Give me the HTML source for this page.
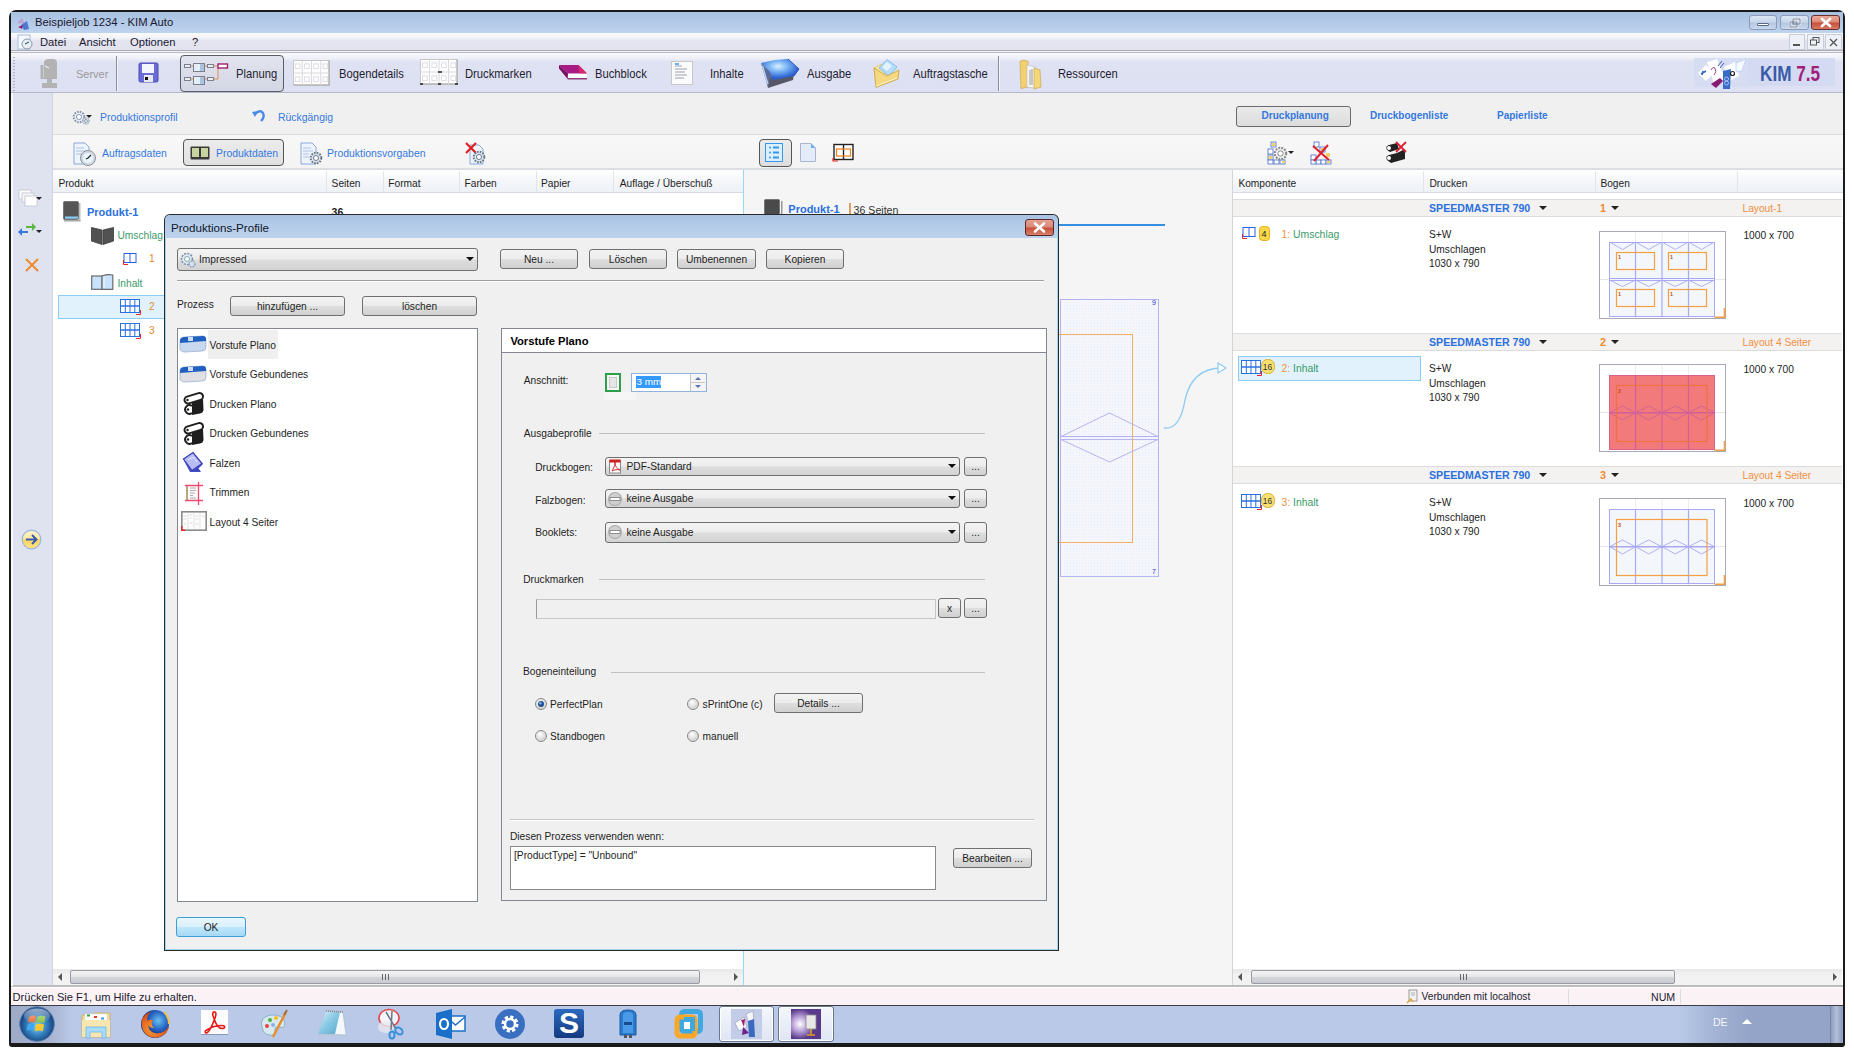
<!DOCTYPE html>
<html><head><meta charset="utf-8">
<style>
*{box-sizing:border-box;margin:0;padding:0}
html,body{width:1854px;height:1056px;overflow:hidden;background:#fff;font-family:"Liberation Sans",sans-serif;font-size:10.2px;color:#1e1e1e}
.a{position:absolute}
.t{position:absolute;white-space:nowrap}
svg.a{overflow:visible}
</style></head><body>
<div class="a" style="left:9px;top:10px;width:1836px;height:1037px;background:#1a1a1a;border-radius:7px 7px 3px 3px"></div>
<div class="a" style="left:11px;top:12px;width:1832px;height:21px;background:linear-gradient(#a8c0e1,#b3c9e7 50%,#bed3ee)"></div>
<div class="t" style="left:35px;top:15.05px;font-size:11.25px;line-height:14px;color:#1a1a30;">Beispieljob 1234 - KIM Auto</div>
<div class="a" style="left:11px;top:33px;width:1832px;height:17px;background:linear-gradient(#fbfbfd 0%,#f2f2f8 30%,#e4e4f0 45%,#e2e3ef 100%)"></div>
<div class="a" style="left:11px;top:50px;width:1832px;height:1px;background:#a8aab4"></div>
<div class="a" style="left:11px;top:51px;width:1832px;height:1px;background:#f4f4f8"></div>
<div class="a" style="left:11px;top:52px;width:1832px;height:1px;background:#b8bac4"></div>
<div class="t" style="left:40px;top:35.25px;font-size:11.2px;line-height:14px;color:#1a1a30;">Datei</div>
<div class="t" style="left:79px;top:35.25px;font-size:11.2px;line-height:14px;color:#1a1a30;">Ansicht</div>
<div class="t" style="left:130px;top:35.25px;font-size:11.2px;line-height:14px;color:#1a1a30;">Optionen</div>
<div class="t" style="left:192px;top:35.25px;font-size:11.2px;line-height:14px;color:#1a1a30;">?</div>
<div class="a" style="left:11px;top:53px;width:1832px;height:40px;background:linear-gradient(#f8f8fc 0%,#f0f1f9 12%,#dfe2f3 22%,#dde0f2 100%)"></div>
<div class="a" style="left:11px;top:92px;width:1832px;height:1px;background:#b4b8c8"></div>
<div class="a" style="left:11px;top:93px;width:42px;height:893px;background:#dfe3ef"></div>
<div class="a" style="left:52px;top:93px;width:1px;height:893px;background:#d0d4e0"></div>
<div class="a" style="left:53px;top:93px;width:1790px;height:42px;background:#f0f0f0"></div>
<div class="a" style="left:53px;top:134px;width:1790px;height:1px;background:#d9d9d9"></div>
<div class="a" style="left:53px;top:135px;width:1790px;height:35px;background:linear-gradient(#f8f8f8,#f3f3f3)"></div>
<div class="a" style="left:53px;top:168px;width:1790px;height:2px;background:#dadde2"></div>
<div class="a" style="left:53px;top:170px;width:690px;height:815px;background:#fff"></div>
<div class="a" style="left:743px;top:170px;width:1px;height:815px;background:#9ad6f5"></div>
<div class="a" style="left:744px;top:170px;width:488px;height:815px;background:#f5f5f5"></div>
<div class="a" style="left:1232px;top:170px;width:1px;height:815px;background:#d4d4d4"></div>
<div class="a" style="left:1233px;top:170px;width:610px;height:815px;background:#fff"></div>
<div class="a" style="left:11px;top:985px;width:1832px;height:2px;background:#bcbcbc"></div>
<div class="a" style="left:11px;top:987px;width:1832px;height:1px;background:#fff"></div>
<div class="a" style="left:11px;top:988px;width:1832px;height:17px;background:#faf2f5"></div>
<div class="t" style="left:12.5px;top:990.25px;font-size:11.1px;line-height:14px;color:#1a1a30;">Drücken Sie F1, um Hilfe zu erhalten.</div>
<div class="a" style="left:1568px;top:989px;width:1px;height:15px;background:#ddd"></div>
<div class="a" style="left:1680px;top:989px;width:1px;height:15px;background:#ddd"></div>
<div class="t" style="left:1421.5px;top:990.24px;font-size:10.2px;line-height:14px;color:#1a1a30;">Verbunden mit localhost</div>
<div class="t" style="left:1651px;top:990.24px;font-size:10.6px;line-height:14px;color:#1a1a30;">NUM</div>
<div class="a" style="left:11px;top:1005px;width:1832px;height:38px;background:linear-gradient(90deg,#b9c9e7 0%,#b9c9e7 91%,#a0b0d2 93.3%,#94a4c8 95%,#94a4c8 100%);border-top:1px solid #3c3c44"></div>
<div class="t" style="left:1713px;top:1015.24px;font-size:10.5px;line-height:14px;color:#f4f6fb;">DE</div>
<div class="a" style="left:1742px;top:1019px;width:0;height:0;border-left:5px solid transparent;border-right:5px solid transparent;border-bottom:5px solid #fff"></div>
<div class="a" style="left:1830px;top:1006px;width:12px;height:37px;background:linear-gradient(90deg,#8d9cc0,#b4bfd8,#8d9cc0);border-left:1px solid #7786aa"></div>
<div class="a" style="left:13px;top:57px;width:2px;height:1px;background:#aab0c4"></div>
<div class="a" style="left:13px;top:60px;width:2px;height:1px;background:#aab0c4"></div>
<div class="a" style="left:13px;top:63px;width:2px;height:1px;background:#aab0c4"></div>
<div class="a" style="left:13px;top:66px;width:2px;height:1px;background:#aab0c4"></div>
<div class="a" style="left:13px;top:69px;width:2px;height:1px;background:#aab0c4"></div>
<div class="a" style="left:13px;top:72px;width:2px;height:1px;background:#aab0c4"></div>
<div class="a" style="left:13px;top:75px;width:2px;height:1px;background:#aab0c4"></div>
<div class="a" style="left:13px;top:78px;width:2px;height:1px;background:#aab0c4"></div>
<div class="a" style="left:13px;top:81px;width:2px;height:1px;background:#aab0c4"></div>
<div class="a" style="left:13px;top:84px;width:2px;height:1px;background:#aab0c4"></div>
<div class="a" style="left:13px;top:87px;width:2px;height:1px;background:#aab0c4"></div>
<div class="a" style="left:13px;top:90px;width:2px;height:1px;background:#aab0c4"></div>
<svg class="a" style="left:41px;top:59px;" width="17" height="29" viewBox="0 0 17 29"><path d="M3 4 Q3 0 8 0 L12 0 Q16 0 16 4 L16 20 L11 20 L11 24 L16 24 L16 29 L1 29 L1 24 L6 24 L6 20 L1 20 L3 18Z" fill="#b3b3b3"/><path d="M1 6 L1 20" stroke="#b3b3b3" stroke-width="3"/><path d="M4 7 L8 9" stroke="#fff" stroke-width="1"/></svg>
<div class="t" style="left:76px;top:66.95px;font-size:11px;line-height:14px;color:#9a9a9a;">Server</div>
<div class="a" style="left:116px;top:56px;width:1px;height:35px;background:#8a8fa0"></div>
<div class="a" style="left:117px;top:56px;width:1px;height:35px;background:#f4f5fb"></div>
<svg class="a" style="left:139px;top:63px;" width="19" height="19" viewBox="0 0 19 19"><rect x="0" y="0" width="19" height="19" rx="1.5" fill="#6c6cd6"/><rect x="0" y="0" width="19" height="19" rx="1.5" fill="none" stroke="#4a4ab0"/><rect x="3" y="1" width="12" height="9" fill="#f4f6ff"/><rect x="5" y="12" width="9" height="7" fill="#e8e8f0"/><rect x="6" y="14" width="3" height="3" fill="#111"/></svg>
<div class="a" style="left:180px;top:55px;width:104px;height:37px;border:1px solid #5a5c66;border-radius:4px;background:linear-gradient(#e2e4ee,#d3d6e4)"></div>
<svg class="a" style="left:184px;top:63px;" width="45" height="22" viewBox="0 0 45 22"><g stroke="#e08a50" stroke-width="1" fill="none"><path d="M6 3 L10 3 M20 3 L24 3 M30 3 L34 3 L34 16 L30 16 M6 16 L10 16 M20 16 L24 16 M34 3 L34 3"/></g><g fill="#e6eef8" stroke="#7a8090" stroke-width="1"><rect x="0.5" y="1.5" width="6" height="3"/><rect x="9.5" y="0.5" width="11" height="8"/><rect x="23.5" y="1.5" width="6" height="3"/><rect x="0.5" y="14.5" width="6" height="3"/><rect x="9.5" y="13.5" width="11" height="8"/><rect x="23.5" y="14.5" width="6" height="3"/></g><rect x="34" y="1" width="9.5" height="4" fill="#fff" stroke="#a0206a" stroke-width="1.4"/><rect x="16" y="1" width="4" height="7" fill="#a8c4e0"/><rect x="16" y="14" width="4" height="7" fill="#a8c4e0"/></svg>
<div class="t" style="left:235.5px;top:66.96px;font-size:12.2px;line-height:14px;color:#1e1e30;transform:scaleX(.92);transform-origin:0 0;">Planung</div>
<svg class="a" style="left:293px;top:60px;" width="37" height="26" viewBox="0 0 37 26"><rect x="0.5" y="0.5" width="36" height="25" fill="#fdfdfd" stroke="#c8c8c8"/><path d="M1 25 H36 V1" stroke="#b4b4b4" stroke-width="1.5" fill="none"/><line x1="9.25" y1="1" x2="9.25" y2="25" stroke="#dadada"/><line x1="18.5" y1="1" x2="18.5" y2="25" stroke="#dadada"/><line x1="27.75" y1="1" x2="27.75" y2="25" stroke="#dadada"/><line x1="1" y1="13.0" x2="36" y2="13.0" stroke="#dadada"/><rect x="2.3" y="3.9" width="4.6" height="4.5" fill="none" stroke="#d4d8e0" stroke-width="0.8"/><rect x="2.3" y="16.9" width="4.6" height="4.5" fill="none" stroke="#d4d8e0" stroke-width="0.8"/><rect x="11.6" y="3.9" width="4.6" height="4.5" fill="none" stroke="#d4d8e0" stroke-width="0.8"/><rect x="11.6" y="16.9" width="4.6" height="4.5" fill="none" stroke="#d4d8e0" stroke-width="0.8"/><rect x="20.8" y="3.9" width="4.6" height="4.5" fill="none" stroke="#d4d8e0" stroke-width="0.8"/><rect x="20.8" y="16.9" width="4.6" height="4.5" fill="none" stroke="#d4d8e0" stroke-width="0.8"/><rect x="30.1" y="3.9" width="4.6" height="4.5" fill="none" stroke="#d4d8e0" stroke-width="0.8"/><rect x="30.1" y="16.9" width="4.6" height="4.5" fill="none" stroke="#d4d8e0" stroke-width="0.8"/></svg>
<div class="t" style="left:338.5px;top:66.96px;font-size:12.2px;line-height:14px;color:#1e1e30;transform:scaleX(.92);transform-origin:0 0;">Bogendetails</div>
<svg class="a" style="left:420px;top:59px;" width="38" height="26" viewBox="0 0 38 26"><rect x="0.5" y="0.5" width="37" height="25" fill="#fdfdfd" stroke="#c8c8c8"/><path d="M1 25 H37 V1" stroke="#b4b4b4" stroke-width="1.5" fill="none"/><line x1="9.5" y1="1" x2="9.5" y2="25" stroke="#dadada"/><line x1="19.0" y1="1" x2="19.0" y2="25" stroke="#dadada"/><line x1="28.5" y1="1" x2="28.5" y2="25" stroke="#dadada"/><line x1="1" y1="13.0" x2="37" y2="13.0" stroke="#dadada"/><rect x="2.4" y="3.9" width="4.8" height="4.5" fill="none" stroke="#d4d8e0" stroke-width="0.8"/><rect x="2.4" y="16.9" width="4.8" height="4.5" fill="none" stroke="#d4d8e0" stroke-width="0.8"/><rect x="11.9" y="3.9" width="4.8" height="4.5" fill="none" stroke="#d4d8e0" stroke-width="0.8"/><rect x="11.9" y="16.9" width="4.8" height="4.5" fill="none" stroke="#d4d8e0" stroke-width="0.8"/><rect x="21.4" y="3.9" width="4.8" height="4.5" fill="none" stroke="#d4d8e0" stroke-width="0.8"/><rect x="21.4" y="16.9" width="4.8" height="4.5" fill="none" stroke="#d4d8e0" stroke-width="0.8"/><rect x="30.9" y="3.9" width="4.8" height="4.5" fill="none" stroke="#d4d8e0" stroke-width="0.8"/><rect x="30.9" y="16.9" width="4.8" height="4.5" fill="none" stroke="#d4d8e0" stroke-width="0.8"/></svg>
<svg class="a" style="left:420px;top:59px;" width="38" height="26" viewBox="0 0 38 26"><path d="M1 1 H37" stroke="url(#cm)" stroke-width="2"/><defs><linearGradient id="cm"><stop offset="0" stop-color="#e33"/><stop offset=".3" stop-color="#fc0"/><stop offset=".6" stop-color="#3c3"/><stop offset="1" stop-color="#39f"/></linearGradient></defs><path d="M0 25 h3 M35 25 h3 M18 25 h3 M18 13 h4" stroke="#222" stroke-width="1.5"/></svg>
<div class="t" style="left:465px;top:66.96px;font-size:12.2px;line-height:14px;color:#1e1e30;transform:scaleX(.92);transform-origin:0 0;">Druckmarken</div>
<svg class="a" style="left:559px;top:64px;" width="29" height="16" viewBox="0 0 29 16"><path d="M0 1 L19.5 1 L28 9.4 L9 9.4 Z" fill="#a81a86"/><path d="M19.5 1 L28 9.4 L20 9.4Z" fill="#d82a6a"/><path d="M0 1 L0 4.5 L8.6 15 L9 9.4Z" fill="#7a1060"/><rect x="9" y="9.8" width="19" height="4.4" fill="#fbfdfd"/><path d="M8.6 14.8 H28" stroke="#7a1060" stroke-width="1.2"/></svg>
<div class="t" style="left:595.4px;top:66.96px;font-size:12.2px;line-height:14px;color:#1e1e30;transform:scaleX(.92);transform-origin:0 0;">Buchblock</div>
<svg class="a" style="left:671px;top:61px;" width="22" height="24" viewBox="0 0 22 24"><rect x="0.5" y="0.5" width="21" height="23" fill="#fbfbfb" stroke="#c8c8c8"/><g stroke="#9aa0b0" stroke-width="1"><path d="M4 5 h7 M4 8 h12 M4 11 h10 M4 14 h12 M4 17 h9"/></g><path d="M4 3 h4" stroke="#39f" stroke-width="1.5"/></svg>
<div class="t" style="left:709.8px;top:66.96px;font-size:12.2px;line-height:14px;color:#1e1e30;transform:scaleX(.92);transform-origin:0 0;">Inhalte</div>
<svg class="a" style="left:761px;top:59px;" width="39" height="30" viewBox="0 0 39 30"><defs><radialGradient id="ausg" cx="45%" cy="35%" r="55%"><stop offset="0" stop-color="#d8f0ff"/><stop offset=".45" stop-color="#7ab4f4"/><stop offset="1" stop-color="#2a60d0"/></radialGradient></defs><path d="M0 4 L10 13 L12 21 L7 29 L4 18 Z" fill="#5a6a98"/><path d="M1.5 7 L5 19 L7 25" stroke="#b8d0f0" stroke-width="1.5" fill="none"/><path d="M9 19 L33 15 L32 21 L7 29 Z" fill="#565868"/><path d="M0 4 L14 1 L27 0 L38 10 L33 17 L12 21 L9 13 Z" fill="url(#ausg)"/><path d="M27 0 L38 10 L33 17" fill="none" stroke="#2a50c0" stroke-width="1"/></svg>
<div class="t" style="left:807px;top:66.96px;font-size:12.2px;line-height:14px;color:#1e1e30;transform:scaleX(.92);transform-origin:0 0;">Ausgabe</div>
<svg class="a" style="left:873px;top:59px;" width="27" height="30" viewBox="0 0 27 30"><path d="M1 9 L9 5 L15 13 L2 18 Z" fill="#f8e4a0" stroke="#d8b860" stroke-width=".6"/><path d="M6 9 L14 0.5 L24 8 L16 17 Z" fill="#b4dcf8" stroke="#78b4e8" stroke-width=".8"/><path d="M9 8 L14 3 L19 7 L14 12Z" fill="#e4f4ff"/><path d="M1 9 L14 17 L26 11 L25 20 L3 28.5 Z" fill="#f6d880" stroke="#c8a040" stroke-width=".8"/><path d="M3 27 L24 19" stroke="#fff4c8" stroke-width="1"/></svg>
<div class="t" style="left:912.7px;top:66.96px;font-size:12.2px;line-height:14px;color:#1e1e30;transform:scaleX(.92);transform-origin:0 0;">Auftragstasche</div>
<div class="a" style="left:998px;top:56px;width:1px;height:35px;background:#8a8fa0"></div>
<div class="a" style="left:999px;top:56px;width:1px;height:35px;background:#f4f5fb"></div>
<svg class="a" style="left:1019px;top:59px;" width="23" height="30" viewBox="0 0 23 30"><path d="M1 2 Q5 0 9 2.5 L9 28 L2 29.5 Z" fill="#f2d070" stroke="#c8a040" stroke-width=".6"/><path d="M8 6 L16 8 L16 29 L8 28 Z" fill="#f6f6f6" stroke="#b8b8b8" stroke-width=".6"/><path d="M11 11 V26 M13 10 V26" stroke="#9a9a9a" stroke-width="1"/><path d="M15 9 L21 11 L22 28 L15 30 Z" fill="#f4d878" stroke="#c8a040" stroke-width=".6"/></svg>
<div class="t" style="left:1058px;top:66.96px;font-size:12.2px;line-height:14px;color:#1e1e30;transform:scaleX(.92);transform-origin:0 0;">Ressourcen</div>
<div class="a" style="left:1694px;top:58px;width:141px;height:28px;background:#d4daf1"></div>
<svg class="a" style="left:1694px;top:58px;" width="54" height="31" viewBox="0 0 54 31"><rect x="0" y="0" width="54" height="29" fill="#d6dcf2"/><path d="M4 15 L12 7 L20 15 L12 23 Z" fill="#fff"/><path d="M13 4 L23 1 L31 20 L21 29 Z" fill="#fff"/><path d="M30 9 L41 4 L45 18 L35 23 Z" fill="#fff"/><path d="M42 5 L52 1 L48 13 L42 14 Z" fill="#f4f8ff" stroke="#b8d0f0" stroke-width=".8"/><path d="M7 16 L12 13 M9 13 L8 17" stroke="#3a68c8" stroke-width="1.6"/><path d="M17 12 Q19 8 21 10 Q23 14 20 17" fill="none" stroke="#a04a90" stroke-width="1"/><path d="M24 8 L28 3 M26 10 L30 5" stroke="#3a58a8" stroke-width="1"/><path d="M17 26 L26 20 L29 23 L22 30 Z" fill="#8a1a70"/><path d="M29 13 L37 11 L36 31 L29 31 Z" fill="#3a6ac8"/><circle cx="32.5" cy="21" r="2" fill="none" stroke="#bcd4f4" stroke-width=".8"/><circle cx="32.5" cy="25" r="2" fill="none" stroke="#bcd4f4" stroke-width=".8"/><circle cx="38.5" cy="15.5" r="2" fill="#fff" stroke="#222" stroke-width="1.2"/></svg>
<div class="t" style="left:1760px;top:60.5px;font-size:22px;line-height:26px;font-weight:bold;color:#3a5aa8;transform:scaleX(.78);transform-origin:0 0">KIM <span style="color:#a0207a">7.5</span></div>
<div class="a" style="left:1749px;top:15px;width:28px;height:15px;border:1px solid #8a9ab8;border-radius:3px;background:linear-gradient(#dbe6f4,#c7d6ea 45%,#b5c8e2 55%,#c8d8ee)"></div>
<div class="a" style="left:1757px;top:23px;width:12px;height:3px;background:#fff;border:1px solid #5a6a88;border-radius:1px"></div>
<div class="a" style="left:1780px;top:15px;width:29px;height:15px;border:1px solid #8a9ab8;border-radius:3px;background:linear-gradient(#dbe6f4,#c7d6ea 45%,#b5c8e2 55%,#c8d8ee)"></div>
<svg class="a" style="left:1789px;top:18px;" width="12" height="10" viewBox="0 0 12 10"><rect x="4" y="1" width="7" height="5" fill="none" stroke="#fff" stroke-width="2.2"/><rect x="1" y="4" width="7" height="5" fill="#c8d6ea" stroke="#fff" stroke-width="2.2"/><rect x="4" y="1" width="7" height="5" fill="none" stroke="#4a5a78" stroke-width=".8"/><rect x="1" y="4" width="7" height="5" fill="none" stroke="#4a5a78" stroke-width=".8"/></svg>
<div class="a" style="left:1811px;top:15px;width:29px;height:15px;border:1px solid #6a3030;border-radius:3px;background:linear-gradient(#eba99a,#dd8a78 45%,#c8503a 55%,#d87a64)"></div>
<svg class="a" style="left:1819px;top:17px;" width="14" height="11" viewBox="0 0 14 11"><path d="M3 2 L11 9 M11 2 L3 9" stroke="#fff" stroke-width="2.8" stroke-linecap="round"/></svg>
<div class="a" style="left:1789px;top:34px;width:16px;height:16px;border:1px solid #c8ccd8;background:#eef2f8"></div>
<div class="a" style="left:1807px;top:34px;width:17px;height:16px;border:1px solid #c8ccd8;background:#eef2f8"></div>
<div class="a" style="left:1825px;top:34px;width:17px;height:16px;border:1px solid #c8ccd8;background:#eef2f8"></div>
<div class="a" style="left:1793px;top:44px;width:7px;height:2px;background:#555"></div>
<svg class="a" style="left:1810px;top:37px;" width="10" height="9" viewBox="0 0 10 9"><rect x="3" y="0.5" width="6" height="5" fill="none" stroke="#555"/><rect x="0.5" y="3" width="6" height="5" fill="#eef2f8" stroke="#555"/></svg>
<svg class="a" style="left:1829px;top:38px;" width="9" height="9" viewBox="0 0 9 9"><path d="M1 1 L8 8 M8 1 L1 8" stroke="#555" stroke-width="1.3"/></svg>
<svg class="a" style="left:15px;top:15px;" width="16" height="16" viewBox="0 0 16 16"><path d="M2 8 L7 3 L10 9Z" fill="#c0a0d0"/><path d="M6 10 L12 6 L14 14 L9 15Z" fill="#4a7ad0"/><path d="M3 12 L8 10 L7 14Z" fill="#a02070"/></svg>
<svg class="a" style="left:17px;top:34px;" width="17" height="16" viewBox="0 0 17 16"><rect x="1" y="1" width="12" height="14" fill="#f4f8ff" stroke="#9ab0d8" stroke-width=".8"/><circle cx="10" cy="10" r="5" fill="#e8eef4" stroke="#8a9aaa"/><path d="M8 10 L12 8" stroke="#246" stroke-width="1"/></svg>
<svg class="a" style="left:72px;top:110px;" width="14" height="14" viewBox="0 0 14 14"><circle cx="7.0" cy="7.0" r="5.32" fill="#e6edf4" stroke="#8a9aae" stroke-width="1.9600000000000002" stroke-dasharray="1.68 1.12"/><circle cx="7.0" cy="7.0" r="2.52" fill="#fff" stroke="#8a9aae" stroke-width="1"/></svg>
<svg class="a" style="left:82px;top:117px;" width="8" height="8" viewBox="0 0 8 8"><circle cx="4.0" cy="4.0" r="3.04" fill="#e6edf4" stroke="#8a9aae" stroke-width="1.12" stroke-dasharray="0.96 0.64"/><circle cx="4.0" cy="4.0" r="1.44" fill="#fff" stroke="#8a9aae" stroke-width="1"/></svg>
<div class="a" style="left:85.5px;top:115.25px;width:0;height:0;border-left:3.5px solid transparent;border-right:3.5px solid transparent;border-top:3.5px solid #222"></div>
<div class="t" style="left:99.8px;top:110.25px;font-size:11.4px;line-height:14px;color:#3478e0;transform:scaleX(.915);transform-origin:0 0;">Produktionsprofil</div>
<svg class="a" style="left:252px;top:109px;" width="14" height="14" viewBox="0 0 14 14"><path d="M3 5 Q8 0 11 4 Q13 8 9 12" fill="none" stroke="#4a8ae8" stroke-width="2.4"/><path d="M0 3 L6 2 L3 8Z" fill="#4a8ae8"/></svg>
<div class="t" style="left:278px;top:110.25px;font-size:11.4px;line-height:14px;color:#3478e0;transform:scaleX(.915);transform-origin:0 0;">Rückgängig</div>
<div class="a" style="left:1236px;top:106px;width:115px;height:21px;border:1px solid #6a6a6a;border-radius:3px;background:linear-gradient(#eaeaea,#dcdcdc)"></div>
<div class="t" style="left:1261.6px;top:109.13px;font-size:10px;line-height:14px;color:#3478e0;font-weight:bold;">Druckplanung</div>
<div class="t" style="left:1370px;top:109.13px;font-size:10px;line-height:14px;color:#3478e0;font-weight:bold;">Druckbogenliste</div>
<div class="t" style="left:1497px;top:109.13px;font-size:10px;line-height:14px;color:#3478e0;font-weight:bold;">Papierliste</div>
<svg class="a" style="left:73px;top:142px;" width="24" height="24" viewBox="0 0 24 24"><path d="M1 1 H12 L16 5 V22 H1Z" fill="#eef4fc" stroke="#8aa8d8" stroke-width="1"/><g stroke="#9ab4dc" stroke-width=".8"><path d="M3 6 h8 M3 9 h10 M3 12 h6"/></g><circle cx="15" cy="16" r="7.5" fill="#d8dde4" stroke="#8a9098"/><circle cx="15" cy="16" r="5.5" fill="#eaf6ff" stroke="#c0c8d0" stroke-width=".6"/><path d="M15 16 L18 13 M15 16 L13 17" stroke="#222" stroke-width="1.2"/></svg>
<div class="t" style="left:101.5px;top:146.15px;font-size:11.4px;line-height:14px;color:#3478e0;transform:scaleX(.915);transform-origin:0 0;">Auftragsdaten</div>
<div class="a" style="left:183px;top:139px;width:101px;height:27px;border:1px solid #555;border-radius:4px;background:linear-gradient(#ececec,#e0e0e0)"></div>
<svg class="a" style="left:190px;top:146px;" width="20" height="14" viewBox="0 0 20 14"><rect x="0.5" y="0.5" width="19" height="13" rx="1" fill="#3a3a3a"/><rect x="2" y="2" width="7" height="9" fill="#c8d4a0"/><rect x="11" y="2" width="7" height="9" fill="#c8d4a0"/></svg>
<div class="t" style="left:216px;top:146.15px;font-size:11.4px;line-height:14px;color:#3478e0;transform:scaleX(.915);transform-origin:0 0;">Produktdaten</div>
<svg class="a" style="left:300px;top:142px;" width="24" height="24" viewBox="0 0 24 24"><path d="M1 1 H12 L16 5 V22 H1Z" fill="#eef4fc" stroke="#8aa8d8" stroke-width="1"/><g stroke="#9ab4dc" stroke-width=".8"><path d="M3 6 h8 M3 9 h10 M3 12 h6 M3 15 h6"/></g></svg>
<svg class="a" style="left:309px;top:151px;" width="14" height="14" viewBox="0 0 14 14"><circle cx="7.0" cy="7.0" r="5.32" fill="#dde4ec" stroke="#6a7a8a" stroke-width="1.9600000000000002" stroke-dasharray="1.68 1.12"/><circle cx="7.0" cy="7.0" r="2.52" fill="#fff" stroke="#6a7a8a" stroke-width="1"/></svg>
<div class="t" style="left:327px;top:146.15px;font-size:11.4px;line-height:14px;color:#3478e0;transform:scaleX(.915);transform-origin:0 0;">Produktionsvorgaben</div>
<svg class="a" style="left:465px;top:142px;" width="24" height="24" viewBox="0 0 24 24"><path d="M5 3 H14 L18 7 V22 H5Z" fill="#eef4fc" stroke="#8aa8d8" stroke-width="1"/><path d="M1 1 L11 11 M11 1 L1 11" stroke="#e02020" stroke-width="2.2"/></svg>
<svg class="a" style="left:472px;top:150px;" width="14" height="14" viewBox="0 0 14 14"><circle cx="7.0" cy="7.0" r="5.32" fill="#dde4ec" stroke="#6a7a8a" stroke-width="1.9600000000000002" stroke-dasharray="1.68 1.12"/><circle cx="7.0" cy="7.0" r="2.52" fill="#fff" stroke="#6a7a8a" stroke-width="1"/></svg>
<div class="a" style="left:759px;top:139px;width:33px;height:28px;border:1px solid #555;border-radius:4px;background:linear-gradient(#ececec,#dedede)"></div>
<svg class="a" style="left:765px;top:143px;" width="18" height="19" viewBox="0 0 18 19"><rect x="0.5" y="0.5" width="17" height="18" fill="#ddeeff" stroke="#3399ee"/><g fill="#3399ee"><circle cx="5" cy="4.5" r="1"/><circle cx="5" cy="9.5" r="1"/><circle cx="5" cy="14.5" r="1"/><rect x="8" y="3.5" width="6" height="2"/><rect x="8" y="8.5" width="6" height="2"/><rect x="8" y="13.5" width="6" height="2"/></g></svg>
<svg class="a" style="left:800px;top:143px;" width="16" height="19" viewBox="0 0 16 19"><path d="M0.5 0.5 H11 L15.5 5 V18.5 H0.5Z" fill="#e4ecfa" stroke="#aab4cc"/><path d="M11 0.5 L15.5 5 H11Z" fill="#6ab0f0"/></svg>
<svg class="a" style="left:833px;top:144px;" width="21" height="17" viewBox="0 0 21 17"><rect x="1" y="0.5" width="19" height="15" fill="#fff" stroke="#222" stroke-width="1.4"/><line x1="10.5" y1="0" x2="10.5" y2="16" stroke="#222" stroke-width="1.4"/><rect x="3.5" y="5" width="14" height="7" fill="none" stroke="#f08020" stroke-width="1.2"/><path d="M0 14 V17 H5" stroke="#e22" stroke-width="1.2" fill="none"/></svg>
<svg class="a" style="left:1267px;top:141px;" width="29" height="24" viewBox="0 0 29 24"><g fill="#fff" stroke="#5a7ad0" stroke-width=".9"><rect x="1" y="8" width="5" height="5"/><rect x="1" y="14" width="5" height="5"/><rect x="1" y="19" width="5" height="4"/><rect x="7" y="19" width="5" height="4"/><rect x="13" y="19" width="5" height="4"/><rect x="4" y="1" width="5" height="5"/></g><g fill="#f4d060"><rect x="2" y="15" width="3" height="3"/><rect x="5" y="2" width="3" height="3"/><rect x="15" y="20" width="3" height="2"/></g></svg>
<svg class="a" style="left:1273px;top:146px;" width="15" height="15" viewBox="0 0 15 15"><circle cx="7.5" cy="7.5" r="5.7" fill="#f2f2f2" stroke="#888" stroke-width="2.1" stroke-dasharray="1.7999999999999998 1.2"/><circle cx="7.5" cy="7.5" r="2.6999999999999997" fill="#fff" stroke="#888" stroke-width="1"/></svg>
<div class="a" style="left:1287.5px;top:151.25px;width:0;height:0;border-left:3.5px solid transparent;border-right:3.5px solid transparent;border-top:3.5px solid #222"></div>
<svg class="a" style="left:1310px;top:141px;" width="22" height="24" viewBox="0 0 22 24"><g fill="#fff" stroke="#5a7ad0" stroke-width=".9"><rect x="1" y="14" width="5" height="5"/><rect x="6" y="19" width="5" height="4"/><rect x="11" y="19" width="5" height="4"/><rect x="16" y="19" width="5" height="4"/><rect x="1" y="19" width="5" height="4"/><rect x="4" y="1" width="5" height="5"/><rect x="10" y="6" width="5" height="5"/></g><g fill="#f4d060"><rect x="11" y="7" width="3" height="3"/><rect x="16" y="12" width="4" height="4"/><rect x="17" y="20" width="3" height="2"/></g><path d="M3 5 L19 19 M18 4 L4 20" stroke="#e02030" stroke-width="2"/></svg>
<svg class="a" style="left:1385px;top:140px;" width="23" height="24" viewBox="0 0 23 24"><path d="M2 10 Q0 6 4 5 L12 3 L14 9 L5 12Z" fill="#222"/><circle cx="4" cy="8" r="2" fill="#fff"/><path d="M2 20 Q0 16 4 15 L12 13 L20 9 L20 19 L6 23Z" fill="#222"/><circle cx="4" cy="18" r="2" fill="#fff"/><path d="M11 2 L21 12 M21 2 L11 12" stroke="#e02030" stroke-width="1.8"/></svg>
<div class="a" style="left:53px;top:170px;width:690px;height:22px;background:linear-gradient(#ffffff,#f4f6fa 50%,#eef1f6)"></div>
<div class="a" style="left:53px;top:192px;width:690px;height:1px;background:#d6dae2"></div>
<div class="t" style="left:58.4px;top:176.74px;font-size:10.2px;line-height:14px;">Produkt</div>
<div class="a" style="left:326px;top:171px;width:1px;height:21px;background:#e2e4ea"></div>
<div class="a" style="left:383px;top:171px;width:1px;height:21px;background:#e2e4ea"></div>
<div class="a" style="left:459px;top:171px;width:1px;height:21px;background:#e2e4ea"></div>
<div class="a" style="left:536px;top:171px;width:1px;height:21px;background:#e2e4ea"></div>
<div class="a" style="left:613px;top:171px;width:1px;height:21px;background:#e2e4ea"></div>
<div class="t" style="left:331.6px;top:176.74px;font-size:10.2px;line-height:14px;">Seiten</div>
<div class="t" style="left:388.3px;top:176.74px;font-size:10.2px;line-height:14px;">Format</div>
<div class="t" style="left:464.5px;top:176.74px;font-size:10.2px;line-height:14px;">Farben</div>
<div class="t" style="left:541px;top:176.74px;font-size:10.2px;line-height:14px;">Papier</div>
<div class="t" style="left:619.7px;top:176.74px;font-size:10.2px;line-height:14px;">Auflage / Überschuß</div>
<div class="a" style="left:58px;top:199px;width:106px;height:24px;background:#fff"></div>
<svg class="a" style="left:63px;top:201px;" width="18" height="21" viewBox="0 0 18 21"><rect x="0.5" y="0.5" width="15" height="18" rx="1" fill="#555" stroke="#777"/><rect x="2" y="15.5" width="13" height="2.2" fill="#88d0f8"/><rect x="16" y="2" width="1.5" height="18" fill="#bdbdbd"/><rect x="1" y="19" width="16.5" height="1.5" fill="#a8a8a8"/></svg>
<div class="t" style="left:87px;top:204.55px;font-size:11px;line-height:14px;color:#2a70e0;font-weight:bold;">Produkt-1</div>
<div class="t" style="left:331.6px;top:205.14px;font-size:10.5px;line-height:14px;color:#222;font-weight:bold;">36</div>
<svg class="a" style="left:91px;top:227px;" width="23" height="19" viewBox="0 0 23 19"><path d="M0.5 0.5 L11 3 L11 17.5 L0.5 14 Z" fill="#525252" stroke="#3a3a3a" stroke-width=".8"/><path d="M12 3 L22.5 0.5 L22.5 14 L12 17.5 Z" fill="#525252" stroke="#3a3a3a" stroke-width=".8"/></svg>
<div class="t" style="left:117.5px;top:229.34px;font-size:10.2px;line-height:14px;color:#3a9a6a;">Umschlag</div>
<svg class="a" style="left:123px;top:253px;" width="14" height="12" viewBox="0 0 14 12"><rect x="1" y="0.5" width="12" height="9" fill="#fff" stroke="#2a60e0"/><line x1="7" y1="0" x2="7" y2="10" stroke="#2a60e0"/><path d="M0.5 7 V11.5 H5" stroke="#e22" fill="none"/></svg>
<div class="t" style="left:149px;top:252.34px;font-size:10.2px;line-height:14px;color:#e08a30;">1</div>
<svg class="a" style="left:91px;top:274px;" width="23" height="16" viewBox="0 0 23 16"><rect x="0.7" y="2" width="10.5" height="13.3" fill="#c8e2fc" stroke="#6a6a6a" stroke-width="1.2"/><path d="M11 15.3 V2 Q16 0 21.8 1 V15.3 Z" fill="#c8e2fc" stroke="#6a6a6a" stroke-width="1.2"/><path d="M13 14 V3" stroke="#f4f8fc" stroke-width="1"/></svg>
<div class="t" style="left:117.5px;top:276.74px;font-size:10.2px;line-height:14px;color:#3a9a6a;">Inhalt</div>
<div class="a" style="left:58px;top:295px;width:107px;height:24px;background:#e2f2fd;border:1px solid #88cdf4;border-right:none"></div>
<svg class="a" style="left:120px;top:299px;" width="21" height="16" viewBox="0 0 21 16"><rect x="0.5" y="0.5" width="19" height="13" fill="#fff" stroke="#2a70e0"/><g stroke="#2a70e0"><line x1="5.3" y1="0" x2="5.3" y2="14"/><line x1="10" y1="0" x2="10" y2="14"/><line x1="14.8" y1="0" x2="14.8" y2="14"/><line x1="0" y1="7" x2="20" y2="7" stroke-width="1.5"/></g><path d="M20.5 11 V15.5 H16" stroke="#e22" fill="none"/></svg>
<div class="t" style="left:149px;top:300.14px;font-size:10.2px;line-height:14px;color:#e08a30;">2</div>
<svg class="a" style="left:120px;top:323px;" width="21" height="16" viewBox="0 0 21 16"><rect x="0.5" y="0.5" width="19" height="13" fill="#fff" stroke="#2a70e0"/><g stroke="#2a70e0"><line x1="5.3" y1="0" x2="5.3" y2="14"/><line x1="10" y1="0" x2="10" y2="14"/><line x1="14.8" y1="0" x2="14.8" y2="14"/><line x1="0" y1="7" x2="20" y2="7" stroke-width="1.5"/></g><path d="M20.5 11 V15.5 H16" stroke="#e22" fill="none"/></svg>
<div class="t" style="left:149px;top:323.74px;font-size:10.2px;line-height:14px;color:#e08a30;">3</div>
<svg class="a" style="left:764px;top:199px;" width="19" height="16" viewBox="0 0 19 16"><rect x="0.5" y="0.5" width="15" height="15" rx="1" fill="#4a4a4a" stroke="#777"/><rect x="17" y="2" width="1.5" height="14" fill="#999"/></svg>
<div class="t" style="left:788.3px;top:202.15px;font-size:11px;line-height:14px;color:#2a70e0;font-weight:bold;">Produkt-1</div>
<div class="a" style="left:849px;top:203px;width:1.5px;height:11px;background:#e0a060"></div>
<div class="t" style="left:853.6px;top:202.74px;font-size:10.6px;line-height:14px;color:#333;">36 Seiten</div>
<div class="a" style="left:1059px;top:224px;width:106px;height:2px;background:#3390e0"></div>
<svg class="a" style="left:1040px;top:290px;" width="200" height="300" viewBox="0 0 200 300"><defs><pattern id="dp" width="3" height="3" patternUnits="userSpaceOnUse"><rect width="3" height="3" fill="#f4f6fc"/><rect width="1" height="1" fill="#e4ecf8"/></pattern></defs><rect x="20.5" y="9.5" width="98" height="277" fill="url(#dp)" stroke="#b4b4f4"/><line x1="20" y1="146.5" x2="119" y2="146.5" stroke="#b4b4f4"/><line x1="20" y1="149.5" x2="119" y2="149.5" stroke="#b4b4f4"/><rect x="10.5" y="44.5" width="82" height="208" fill="none" stroke="#f4b060"/><path d="M20 147 L69.5 123 L119 147 M20 149 L69.5 172 L119 149" fill="none" stroke="#b4b4f4"/><text x="112" y="15" font-size="7" fill="#3333cc" font-family="Liberation Sans">9</text><text x="112" y="284" font-size="7" fill="#3333cc" font-family="Liberation Sans">7</text><path d="M124 138 Q140 140 145 110 Q152 78 182 78" fill="none" stroke="#8ccaf4" stroke-width="1.3"/><path d="M178 73 L186 78 L178 83Z" fill="#fff" stroke="#8ccaf4" stroke-width="1.2"/></svg>
<div class="a" style="left:1233px;top:170px;width:610px;height:22px;background:linear-gradient(#ffffff,#f4f6fa 50%,#eef1f6)"></div>
<div class="a" style="left:1233px;top:192px;width:610px;height:1px;background:#d6dae2"></div>
<div class="t" style="left:1238.4px;top:177.14px;font-size:10.2px;line-height:14px;">Komponente</div>
<div class="a" style="left:1423px;top:171px;width:1px;height:21px;background:#e2e4ea"></div>
<div class="a" style="left:1595px;top:171px;width:1px;height:21px;background:#e2e4ea"></div>
<div class="a" style="left:1737px;top:171px;width:1px;height:21px;background:#e2e4ea"></div>
<div class="t" style="left:1429.4px;top:177.14px;font-size:10.2px;line-height:14px;">Drucken</div>
<div class="t" style="left:1600.4px;top:177.14px;font-size:10.2px;line-height:14px;">Bogen</div>
<div class="a" style="left:1233px;top:199px;width:609px;height:18px;background:#f4f1f1;border-top:1px solid #dcdcdc;border-bottom:1px solid #dcdcdc"></div>
<div class="t" style="left:1429px;top:200.94px;font-size:10.6px;line-height:14px;color:#2a70e0;font-weight:bold;">SPEEDMASTER 790</div>
<div class="a" style="left:1538.5px;top:205.8px;width:0;height:0;border-left:4px solid transparent;border-right:4px solid transparent;border-top:4px solid #222"></div>
<div class="t" style="left:1600px;top:200.95px;font-size:10.8px;line-height:14px;color:#f08a30;font-weight:bold;">1</div>
<div class="a" style="left:1610.5px;top:205.8px;width:0;height:0;border-left:4px solid transparent;border-right:4px solid transparent;border-top:4px solid #222"></div>
<div class="t" style="left:1742.5px;top:201.54px;font-size:10.2px;line-height:14px;color:#f09040;">Layout-1</div>
<svg class="a" style="left:1242px;top:227px;" width="14" height="12" viewBox="0 0 14 12"><rect x="1" y="0.5" width="12" height="9" fill="#fff" stroke="#2a60e0"/><line x1="7" y1="0" x2="7" y2="10" stroke="#2a60e0"/><path d="M0.5 7 V11.5 H5" stroke="#e22" fill="none"/></svg>
<svg class="a" style="left:1259px;top:226px;" width="12" height="15" viewBox="0 0 12 15"><rect x="0.5" y="0.5" width="10" height="14" rx="3" fill="#f8d848" stroke="#e8b020"/><text x="2.5" y="11" font-size="9" font-family="Liberation Sans" fill="#222">4</text></svg>
<div class="t" style="left:1281.5px;top:228.34px;font-size:10.4px;line-height:14px;color:#3a9a6a;"><span style="color:#f09040">1:</span> Umschlag</div>
<div class="t" style="left:1429px;top:228.34px;font-size:10.2px;line-height:14px;color:#222;">S+W</div>
<div class="t" style="left:1429px;top:242.74px;font-size:10.2px;line-height:14px;color:#222;">Umschlagen</div>
<div class="t" style="left:1429px;top:256.94px;font-size:10.2px;line-height:14px;color:#222;">1030 x 790</div>
<div class="t" style="left:1743.4px;top:229.14px;font-size:10.2px;line-height:14px;color:#222;">1000 x 700</div>
<svg class="a" style="left:1599px;top:231px;" width="127" height="88" viewBox="0 0 127 88"><rect x="0.5" y="0.5" width="126" height="87" fill="#fff" stroke="#a8a8b8"/><line x1="1" y1="48.5" x2="126" y2="48.5" stroke="#e6e6e6"/><line x1="36.5" y1="1" x2="36.5" y2="87" stroke="#ececec"/><line x1="63" y1="1" x2="63" y2="87" stroke="#ececec"/><line x1="89.5" y1="1" x2="89.5" y2="87" stroke="#ececec"/><rect x="10.5" y="11.5" width="105.0" height="74.0" fill="#f3f7fb" stroke="#a8a8f4"/><line x1="36.5" y1="11.5" x2="36.5" y2="85.5" stroke="#a8a8f4" stroke-width="1.2"/><line x1="63" y1="11.5" x2="63" y2="85.5" stroke="#a8a8f4" stroke-width="1.2"/><line x1="89.5" y1="11.5" x2="89.5" y2="85.5" stroke="#a8a8f4" stroke-width="1.2"/><line x1="10.5" y1="47.5" x2="115.5" y2="47.5" stroke="#a8a8f4"/><line x1="10.5" y1="49.5" x2="115.5" y2="49.5" stroke="#a8a8f4"/><path d="M11.5 11.5 L23.5 18.5 L35.5 11.5" fill="none" stroke="#a8a8f4" stroke-width=".9"/><path d="M37.5 11.5 L49.75 18.5 L62 11.5" fill="none" stroke="#a8a8f4" stroke-width=".9"/><path d="M64 11.5 L76.25 18.5 L88.5 11.5" fill="none" stroke="#a8a8f4" stroke-width=".9"/><path d="M90.5 11.5 L102.5 18.5 L114.5 11.5" fill="none" stroke="#a8a8f4" stroke-width=".9"/><path d="M11.5 49.5 L23.5 55.5 L35.5 49.5" fill="none" stroke="#a8a8f4" stroke-width=".9"/><path d="M37.5 49.5 L49.75 55.5 L62 49.5" fill="none" stroke="#a8a8f4" stroke-width=".9"/><path d="M64 49.5 L76.25 55.5 L88.5 49.5" fill="none" stroke="#a8a8f4" stroke-width=".9"/><path d="M90.5 49.5 L102.5 55.5 L114.5 49.5" fill="none" stroke="#a8a8f4" stroke-width=".9"/><rect x="17.5" y="21.5" width="38" height="17" fill="none" stroke="#f4a040" stroke-width="1.2"/><text x="19.0" y="28.0" font-size="5.5" font-weight="bold" fill="#c05020" font-family="Liberation Sans">1</text><rect x="69.5" y="21.5" width="38" height="17" fill="none" stroke="#f4a040" stroke-width="1.2"/><text x="71.0" y="28.0" font-size="5.5" font-weight="bold" fill="#c05020" font-family="Liberation Sans">1</text><rect x="17.5" y="58.5" width="38" height="17" fill="none" stroke="#f4a040" stroke-width="1.2"/><text x="19.0" y="65.0" font-size="5.5" font-weight="bold" fill="#c05020" font-family="Liberation Sans">1</text><rect x="69.5" y="58.5" width="38" height="17" fill="none" stroke="#f4a040" stroke-width="1.2"/><text x="71.0" y="65.0" font-size="5.5" font-weight="bold" fill="#c05020" font-family="Liberation Sans">1</text><path d="M115.5 86.2 H125.5 V77" fill="none" stroke="#f4a040" stroke-width="1.6"/></svg>
<div class="a" style="left:1233px;top:333px;width:609px;height:18px;background:#f4f1f1;border-top:1px solid #dcdcdc;border-bottom:1px solid #dcdcdc"></div>
<div class="t" style="left:1429px;top:334.94px;font-size:10.6px;line-height:14px;color:#2a70e0;font-weight:bold;">SPEEDMASTER 790</div>
<div class="a" style="left:1538.5px;top:339.8px;width:0;height:0;border-left:4px solid transparent;border-right:4px solid transparent;border-top:4px solid #222"></div>
<div class="t" style="left:1600px;top:334.95px;font-size:10.8px;line-height:14px;color:#f08a30;font-weight:bold;">2</div>
<div class="a" style="left:1610.5px;top:339.8px;width:0;height:0;border-left:4px solid transparent;border-right:4px solid transparent;border-top:4px solid #222"></div>
<div class="t" style="left:1742.5px;top:335.54px;font-size:10.2px;line-height:14px;color:#f09040;">Layout 4 Seiter</div>
<div class="a" style="left:1238px;top:356px;width:183px;height:25px;background:#e2f2fd;border:1px solid #88cdf4"></div>
<svg class="a" style="left:1241px;top:360px;" width="21" height="16" viewBox="0 0 21 16"><rect x="0.5" y="0.5" width="19" height="13" fill="#fff" stroke="#2a70e0"/><g stroke="#2a70e0"><line x1="5.3" y1="0" x2="5.3" y2="14"/><line x1="10" y1="0" x2="10" y2="14"/><line x1="14.8" y1="0" x2="14.8" y2="14"/><line x1="0" y1="7" x2="20" y2="7" stroke-width="1.5"/></g><path d="M20.5 11 V15.5 H16" stroke="#e22" fill="none"/></svg>
<svg class="a" style="left:1261px;top:359px;" width="14" height="15" viewBox="0 0 14 15"><rect x="0.5" y="0.5" width="13" height="14" rx="6" fill="#f8e070" stroke="#d8b030"/><text x="1.8" y="10.8" font-size="8.5" font-family="Liberation Sans" fill="#333">16</text></svg>
<div class="t" style="left:1281.5px;top:362.34px;font-size:10.4px;line-height:14px;color:#3a9a6a;"><span style="color:#f09040">2:</span> Inhalt</div>
<div class="t" style="left:1429px;top:362.34px;font-size:10.2px;line-height:14px;color:#222;">S+W</div>
<div class="t" style="left:1429px;top:376.74px;font-size:10.2px;line-height:14px;color:#222;">Umschlagen</div>
<div class="t" style="left:1429px;top:390.94px;font-size:10.2px;line-height:14px;color:#222;">1030 x 790</div>
<div class="t" style="left:1743.4px;top:363.14px;font-size:10.2px;line-height:14px;color:#222;">1000 x 700</div>
<svg class="a" style="left:1599px;top:364px;" width="127" height="88" viewBox="0 0 127 88"><rect x="0.5" y="0.5" width="126" height="87" fill="#fff" stroke="#a8a8b8"/><line x1="1" y1="48.5" x2="126" y2="48.5" stroke="#e6e6e6"/><line x1="36.5" y1="1" x2="36.5" y2="87" stroke="#ececec"/><line x1="63" y1="1" x2="63" y2="87" stroke="#ececec"/><line x1="89.5" y1="1" x2="89.5" y2="87" stroke="#ececec"/><rect x="10.5" y="11.5" width="105.0" height="74.0" fill="#f27a7a" stroke="#d8608c"/><line x1="36.5" y1="11.5" x2="36.5" y2="85.5" stroke="#d0609a" stroke-width="1.2"/><line x1="63" y1="11.5" x2="63" y2="85.5" stroke="#d0609a" stroke-width="1.2"/><line x1="89.5" y1="11.5" x2="89.5" y2="85.5" stroke="#d0609a" stroke-width="1.2"/><line x1="10.5" y1="48.7" x2="115.5" y2="48.7" stroke="#d0609a" stroke-width="1.6"/><path d="M10.5 48.7 L23.5 42 L36.5 48.7 L23.5 56Z" fill="none" stroke="#d0609a" stroke-width=".9"/><path d="M36.5 48.7 L49.75 42 L63 48.7 L49.75 56Z" fill="none" stroke="#d0609a" stroke-width=".9"/><path d="M63 48.7 L76.25 42 L89.5 48.7 L76.25 56Z" fill="none" stroke="#d0609a" stroke-width=".9"/><path d="M89.5 48.7 L102.5 42 L115.5 48.7 L102.5 56Z" fill="none" stroke="#d0609a" stroke-width=".9"/><rect x="17.5" y="21.5" width="90.5" height="56" fill="none" stroke="#f07040" stroke-width="1.2"/><text x="19" y="28.5" font-size="5.5" font-weight="bold" fill="#c05020" font-family="Liberation Sans">2</text><path d="M115.5 86.2 H125.5 V77" fill="none" stroke="#f4a040" stroke-width="1.6"/></svg>
<div class="a" style="left:1233px;top:466px;width:609px;height:18px;background:#f4f1f1;border-top:1px solid #dcdcdc;border-bottom:1px solid #dcdcdc"></div>
<div class="t" style="left:1429px;top:467.94px;font-size:10.6px;line-height:14px;color:#2a70e0;font-weight:bold;">SPEEDMASTER 790</div>
<div class="a" style="left:1538.5px;top:472.8px;width:0;height:0;border-left:4px solid transparent;border-right:4px solid transparent;border-top:4px solid #222"></div>
<div class="t" style="left:1600px;top:467.95px;font-size:10.8px;line-height:14px;color:#f08a30;font-weight:bold;">3</div>
<div class="a" style="left:1610.5px;top:472.8px;width:0;height:0;border-left:4px solid transparent;border-right:4px solid transparent;border-top:4px solid #222"></div>
<div class="t" style="left:1742.5px;top:468.54px;font-size:10.2px;line-height:14px;color:#f09040;">Layout 4 Seiter</div>
<svg class="a" style="left:1241px;top:494px;" width="21" height="16" viewBox="0 0 21 16"><rect x="0.5" y="0.5" width="19" height="13" fill="#fff" stroke="#2a70e0"/><g stroke="#2a70e0"><line x1="5.3" y1="0" x2="5.3" y2="14"/><line x1="10" y1="0" x2="10" y2="14"/><line x1="14.8" y1="0" x2="14.8" y2="14"/><line x1="0" y1="7" x2="20" y2="7" stroke-width="1.5"/></g><path d="M20.5 11 V15.5 H16" stroke="#e22" fill="none"/></svg>
<svg class="a" style="left:1261px;top:493px;" width="14" height="15" viewBox="0 0 14 15"><rect x="0.5" y="0.5" width="13" height="14" rx="6" fill="#f8e070" stroke="#d8b030"/><text x="1.8" y="10.8" font-size="8.5" font-family="Liberation Sans" fill="#333">16</text></svg>
<div class="t" style="left:1281.5px;top:496.34px;font-size:10.4px;line-height:14px;color:#3a9a6a;"><span style="color:#f09040">3:</span> Inhalt</div>
<div class="t" style="left:1429px;top:496.34px;font-size:10.2px;line-height:14px;color:#222;">S+W</div>
<div class="t" style="left:1429px;top:510.74px;font-size:10.2px;line-height:14px;color:#222;">Umschlagen</div>
<div class="t" style="left:1429px;top:524.94px;font-size:10.2px;line-height:14px;color:#222;">1030 x 790</div>
<div class="t" style="left:1743.4px;top:497.14px;font-size:10.2px;line-height:14px;color:#222;">1000 x 700</div>
<svg class="a" style="left:1599px;top:498px;" width="127" height="88" viewBox="0 0 127 88"><rect x="0.5" y="0.5" width="126" height="87" fill="#fff" stroke="#a8a8b8"/><line x1="1" y1="48.5" x2="126" y2="48.5" stroke="#e6e6e6"/><line x1="36.5" y1="1" x2="36.5" y2="87" stroke="#ececec"/><line x1="63" y1="1" x2="63" y2="87" stroke="#ececec"/><line x1="89.5" y1="1" x2="89.5" y2="87" stroke="#ececec"/><rect x="10.5" y="11.5" width="105.0" height="74.0" fill="#f3f7fb" stroke="#a8a8f4"/><line x1="36.5" y1="11.5" x2="36.5" y2="85.5" stroke="#a8a8f4" stroke-width="1.2"/><line x1="63" y1="11.5" x2="63" y2="85.5" stroke="#a8a8f4" stroke-width="1.2"/><line x1="89.5" y1="11.5" x2="89.5" y2="85.5" stroke="#a8a8f4" stroke-width="1.2"/><line x1="10.5" y1="48.7" x2="115.5" y2="48.7" stroke="#a8a8f4" stroke-width="1.6"/><path d="M10.5 48.7 L23.5 42 L36.5 48.7 L23.5 56Z" fill="none" stroke="#a8a8f4" stroke-width=".9"/><path d="M36.5 48.7 L49.75 42 L63 48.7 L49.75 56Z" fill="none" stroke="#a8a8f4" stroke-width=".9"/><path d="M63 48.7 L76.25 42 L89.5 48.7 L76.25 56Z" fill="none" stroke="#a8a8f4" stroke-width=".9"/><path d="M89.5 48.7 L102.5 42 L115.5 48.7 L102.5 56Z" fill="none" stroke="#a8a8f4" stroke-width=".9"/><rect x="17.5" y="21.5" width="90.5" height="56" fill="none" stroke="#f4a040" stroke-width="1.2"/><text x="19" y="28.5" font-size="5.5" font-weight="bold" fill="#c05020" font-family="Liberation Sans">3</text><path d="M115.5 86.2 H125.5 V77" fill="none" stroke="#f4a040" stroke-width="1.6"/></svg>
<div class="a" style="left:164px;top:214px;width:895px;height:737px;background:#2a2a2a;border-radius:6px 6px 0 0"></div>
<div class="a" style="left:165px;top:215px;width:893px;height:735px;background:#9fd3ee;border-radius:5px 5px 0 0"></div>
<div class="a" style="left:165px;top:215px;width:892px;height:23px;background:linear-gradient(#a8c2e4 0%,#b4cbe9 45%,#bcd1ec 100%);border-radius:5px 5px 0 0"></div>
<div class="a" style="left:166px;top:238px;width:891px;height:711px;background:#f0f0f0"></div>
<div class="t" style="left:171px;top:220.76px;font-size:11.6px;line-height:14px;color:#101828;">Produktions-Profile</div>
<div class="a" style="left:1025px;top:219px;width:29px;height:17px;border:1px solid #5a2a2a;border-radius:3px;background:linear-gradient(#e8a090 0%,#d98a78 45%,#c8503a 55%,#d8806a 100%)"></div>
<svg class="a" style="left:1032px;top:222px;" width="15" height="11" viewBox="0 0 15 11"><path d="M3 1.5 L12 9.5 M12 1.5 L3 9.5" stroke="#fff" stroke-width="2.6" stroke-linecap="round"/></svg>
<div class="a" style="left:177px;top:248px;width:301px;height:23px;border:1px solid #6f6f6f;border-radius:3px;background:linear-gradient(#f4f4f4 0%,#ececec 48%,#dddddd 52%,#d3d3d3 100%)"></div>
<div class="a" style="left:465.5px;top:256.5px;width:0;height:0;border-left:4px solid transparent;border-right:4px solid transparent;border-top:4px solid #111"></div>
<div class="t" style="left:199px;top:253.24px;font-size:10.2px;line-height:14px;">Impressed</div>
<svg class="a" style="left:180px;top:252px;" width="16" height="16" viewBox="0 0 16 16"><circle cx="7" cy="7" r="5.5" fill="#dfe8f2" stroke="#7f93a8" stroke-width="1.6" stroke-dasharray="2 1.2"/><circle cx="7" cy="7" r="2.5" fill="#fff" stroke="#8aa" /><circle cx="12" cy="12" r="3" fill="#cfe0ee" stroke="#7f93a8" stroke-width="1.2" stroke-dasharray="1.5 1"/></svg>
<div class="a" style="left:500px;top:249px;width:78px;height:20px;border:1px solid #707070;border-radius:3px;background:linear-gradient(#f3f3f3 0%,#ececec 48%,#dedede 52%,#d0d0d0 100%);"></div>
<div class="t" style="left:500px;width:78px;text-align:center;top:252.74px;font-size:10.2px;line-height:14px;">Neu ...</div>
<div class="a" style="left:589px;top:249px;width:78px;height:20px;border:1px solid #707070;border-radius:3px;background:linear-gradient(#f3f3f3 0%,#ececec 48%,#dedede 52%,#d0d0d0 100%);"></div>
<div class="t" style="left:589px;width:78px;text-align:center;top:252.74px;font-size:10.2px;line-height:14px;">Löschen</div>
<div class="a" style="left:677px;top:249px;width:79px;height:20px;border:1px solid #707070;border-radius:3px;background:linear-gradient(#f3f3f3 0%,#ececec 48%,#dedede 52%,#d0d0d0 100%);"></div>
<div class="t" style="left:677px;width:79px;text-align:center;top:252.74px;font-size:10.2px;line-height:14px;">Umbenennen</div>
<div class="a" style="left:766px;top:249px;width:78px;height:20px;border:1px solid #707070;border-radius:3px;background:linear-gradient(#f3f3f3 0%,#ececec 48%,#dedede 52%,#d0d0d0 100%);"></div>
<div class="t" style="left:766px;width:78px;text-align:center;top:252.74px;font-size:10.2px;line-height:14px;">Kopieren</div>
<div class="a" style="left:177px;top:280px;width:867px;height:1px;background:#a0a0a0"></div>
<div class="a" style="left:177px;top:281px;width:867px;height:1px;background:#fff"></div>
<div class="t" style="left:177px;top:297.74px;font-size:10.2px;line-height:14px;">Prozess</div>
<div class="a" style="left:230px;top:296px;width:115px;height:20px;border:1px solid #707070;border-radius:3px;background:linear-gradient(#f3f3f3 0%,#ececec 48%,#dedede 52%,#d0d0d0 100%);"></div>
<div class="t" style="left:230px;width:115px;text-align:center;top:299.74px;font-size:10.2px;line-height:14px;">hinzufügen ...</div>
<div class="a" style="left:362px;top:296px;width:115px;height:20px;border:1px solid #707070;border-radius:3px;background:linear-gradient(#f3f3f3 0%,#ececec 48%,#dedede 52%,#d0d0d0 100%);"></div>
<div class="t" style="left:362px;width:115px;text-align:center;top:299.74px;font-size:10.2px;line-height:14px;">löschen</div>
<div class="a" style="left:177px;top:328px;width:301px;height:574px;border:1px solid #828790;background:#fff"></div>
<div class="a" style="left:208px;top:330px;width:70px;height:29px;background:#efefef"></div>
<div class="t" style="left:209.6px;top:338.74px;font-size:10.2px;line-height:14px;">Vorstufe Plano</div>
<div class="t" style="left:209.6px;top:368.44px;font-size:10.2px;line-height:14px;">Vorstufe Gebundenes</div>
<div class="t" style="left:209.6px;top:397.74px;font-size:10.2px;line-height:14px;">Drucken Plano</div>
<div class="t" style="left:209.6px;top:427.24px;font-size:10.2px;line-height:14px;">Drucken Gebundenes</div>
<div class="t" style="left:209.6px;top:456.74px;font-size:10.2px;line-height:14px;">Falzen</div>
<div class="t" style="left:209.6px;top:486.44px;font-size:10.2px;line-height:14px;">Trimmen</div>
<div class="t" style="left:209.6px;top:515.74px;font-size:10.2px;line-height:14px;">Layout 4 Seiter</div>
<div class="a" style="left:501px;top:328px;width:546px;height:573px;border:1px solid #828790;background:#f0f0f0"></div>
<div class="a" style="left:502px;top:329px;width:544px;height:23px;background:#fff"></div>
<div class="a" style="left:502px;top:352px;width:544px;height:1px;background:#828790"></div>
<div class="t" style="left:510.4px;top:333.55px;font-size:11.2px;line-height:14px;color:#000;font-weight:bold;">Vorstufe Plano</div>
<div class="t" style="left:523.7px;top:374.44px;font-size:10.2px;line-height:14px;">Anschnitt:</div>
<div class="a" style="left:605px;top:373px;width:16px;height:19px;border:2px solid #2e9e4a;background:#f7f7f7"></div>
<div class="a" style="left:609px;top:377px;width:8px;height:11px;background:#e6e6e6;border:1px solid #c8c8c8"></div>
<div class="a" style="left:631px;top:373px;width:76px;height:19px;border:1px solid #8fb3db;background:#fff"></div>
<div class="a" style="left:690px;top:374px;width:16px;height:17px;background:#f4f4f4;border-left:1px solid #c8c8c8"></div>
<div class="a" style="left:691px;top:382px;width:14px;height:1px;background:#c8c8c8"></div>
<div class="a" style="left:695px;top:377px;border-left:3px solid transparent;border-right:3px solid transparent;border-bottom:3px solid #5a6fb8"></div>
<div class="a" style="left:695px;top:385px;border-left:3px solid transparent;border-right:3px solid transparent;border-top:3px solid #5a6fb8"></div>
<div class="a" style="left:604px;top:392px;width:32px;height:8px;background:#f6f6f6"></div>
<div class="a" style="left:636px;top:376px;width:25px;height:12px;background:#3399ff"></div>
<div class="t" style="left:636.5px;top:375.23px;font-size:9.9px;line-height:14px;color:#fff;">3 mm</div>
<div class="t" style="left:523.7px;top:427.04px;font-size:10.2px;line-height:14px;">Ausgabeprofile</div>
<div class="a" style="left:599px;top:433px;width:386px;height:1px;background:#c0c0c0"></div>
<div class="t" style="left:535.2px;top:461.14px;font-size:10.2px;line-height:14px;">Druckbogen:</div>
<div class="a" style="left:605px;top:457px;width:355px;height:19px;border:1px solid #6f6f6f;border-radius:3px;background:linear-gradient(#f4f4f4 0%,#ececec 48%,#dddddd 52%,#d3d3d3 100%)"></div>
<div class="a" style="left:947.5px;top:463.5px;width:0;height:0;border-left:4px solid transparent;border-right:4px solid transparent;border-top:4px solid #111"></div>
<div class="t" style="left:626.5px;top:460.24px;font-size:10.2px;line-height:14px;">PDF-Standard</div>
<div class="a" style="left:964px;top:457px;width:23px;height:19px;border:1px solid #707070;border-radius:3px;background:linear-gradient(#f3f3f3 0%,#ececec 48%,#dedede 52%,#d0d0d0 100%);"></div>
<div class="t" style="left:964px;width:23px;text-align:center;top:460.24px;font-size:10.2px;line-height:14px;">...</div>
<div class="t" style="left:535.2px;top:493.74px;font-size:10.2px;line-height:14px;">Falzbogen:</div>
<div class="a" style="left:605px;top:489px;width:355px;height:19px;border:1px solid #6f6f6f;border-radius:3px;background:linear-gradient(#f4f4f4 0%,#ececec 48%,#dddddd 52%,#d3d3d3 100%)"></div>
<div class="a" style="left:947.5px;top:495.5px;width:0;height:0;border-left:4px solid transparent;border-right:4px solid transparent;border-top:4px solid #111"></div>
<div class="t" style="left:626.5px;top:492.24px;font-size:10.2px;line-height:14px;">keine Ausgabe</div>
<div class="a" style="left:964px;top:489px;width:23px;height:19px;border:1px solid #707070;border-radius:3px;background:linear-gradient(#f3f3f3 0%,#ececec 48%,#dedede 52%,#d0d0d0 100%);"></div>
<div class="t" style="left:964px;width:23px;text-align:center;top:492.24px;font-size:10.2px;line-height:14px;">...</div>
<div class="t" style="left:535.2px;top:526.24px;font-size:10.2px;line-height:14px;">Booklets:</div>
<div class="a" style="left:605px;top:522px;width:355px;height:21px;border:1px solid #6f6f6f;border-radius:3px;background:linear-gradient(#f4f4f4 0%,#ececec 48%,#dddddd 52%,#d3d3d3 100%)"></div>
<div class="a" style="left:947.5px;top:529.5px;width:0;height:0;border-left:4px solid transparent;border-right:4px solid transparent;border-top:4px solid #111"></div>
<div class="t" style="left:626.5px;top:526.24px;font-size:10.2px;line-height:14px;">keine Ausgabe</div>
<div class="a" style="left:964px;top:522px;width:23px;height:21px;border:1px solid #707070;border-radius:3px;background:linear-gradient(#f3f3f3 0%,#ececec 48%,#dedede 52%,#d0d0d0 100%);"></div>
<div class="t" style="left:964px;width:23px;text-align:center;top:526.24px;font-size:10.2px;line-height:14px;">...</div>
<svg class="a" style="left:608px;top:459px;" width="15" height="15" viewBox="0 0 15 15"><rect x="1.5" y="1.5" width="11" height="12.5" fill="#fff" stroke="#888"/><rect x="1.5" y="0.5" width="11" height="3" fill="#c22"/><path d="M4 12 C6 8 8 5 7 3 C6 5 9 10 12 11 C9 10 6 11 4 12Z" fill="none" stroke="#c22" stroke-width="1"/></svg>
<svg class="a" style="left:607px;top:490.5px;" width="16" height="16" viewBox="0 0 16 16"><circle cx="8" cy="8" r="7" fill="#a9a9a9"/><circle cx="8" cy="8" r="6" fill="#d0d0d0"/><rect x="3" y="6.5" width="10" height="3" fill="#fff" stroke="#777" stroke-width="0.8"/></svg>
<svg class="a" style="left:607px;top:524px;" width="16" height="16" viewBox="0 0 16 16"><circle cx="8" cy="8" r="7" fill="#a9a9a9"/><circle cx="8" cy="8" r="6" fill="#d0d0d0"/><rect x="3" y="6.5" width="10" height="3" fill="#fff" stroke="#777" stroke-width="0.8"/></svg>
<div class="t" style="left:523.2px;top:572.74px;font-size:10.2px;line-height:14px;">Druckmarken</div>
<div class="a" style="left:599px;top:579px;width:386px;height:1px;background:#c0c0c0"></div>
<div class="a" style="left:536px;top:599px;width:400px;height:20px;border:1px solid #c6c6c6;border-left-color:#9a9a9a;background:#f0f0f0"></div>
<div class="a" style="left:938px;top:598px;width:23px;height:20px;border:1px solid #707070;border-radius:3px;background:linear-gradient(#f3f3f3 0%,#ececec 48%,#dedede 52%,#d0d0d0 100%);"></div>
<div class="t" style="left:938px;width:23px;text-align:center;top:601.74px;font-size:10.2px;line-height:14px;">x</div>
<div class="a" style="left:964px;top:598px;width:23px;height:20px;border:1px solid #707070;border-radius:3px;background:linear-gradient(#f3f3f3 0%,#ececec 48%,#dedede 52%,#d0d0d0 100%);"></div>
<div class="t" style="left:964px;width:23px;text-align:center;top:601.74px;font-size:10.2px;line-height:14px;">...</div>
<div class="t" style="left:523px;top:664.74px;font-size:10.2px;line-height:14px;">Bogeneinteilung</div>
<div class="a" style="left:611px;top:672px;width:374px;height:1px;background:#c0c0c0"></div>
<svg class="a" style="left:534.7px;top:698px;" width="12" height="12" viewBox="0 0 12 12"><defs><radialGradient id="rg" cx="40%" cy="35%"><stop offset="0" stop-color="#fff"/><stop offset="1" stop-color="#d8d8d8"/></radialGradient></defs><circle cx="6" cy="6" r="5.5" fill="url(#rg)" stroke="#8a8a8a"/><circle cx="6" cy="6" r="3" fill="#1e4f8e"/><circle cx="5.3" cy="5.3" r="1.3" fill="#6fb3f0"/></svg>
<div class="t" style="left:550px;top:697.74px;font-size:10.2px;line-height:14px;">PerfectPlan</div>
<svg class="a" style="left:687px;top:698px;" width="12" height="12" viewBox="0 0 12 12"><defs><radialGradient id="rg" cx="40%" cy="35%"><stop offset="0" stop-color="#fff"/><stop offset="1" stop-color="#d8d8d8"/></radialGradient></defs><circle cx="6" cy="6" r="5.5" fill="url(#rg)" stroke="#8a8a8a"/></svg>
<div class="t" style="left:702.6px;top:697.74px;font-size:10.2px;line-height:14px;">sPrintOne (c)</div>
<div class="a" style="left:774px;top:693px;width:89px;height:20px;border:1px solid #707070;border-radius:3px;background:linear-gradient(#f3f3f3 0%,#ececec 48%,#dedede 52%,#d0d0d0 100%);"></div>
<div class="t" style="left:774px;width:89px;text-align:center;top:696.74px;font-size:10.2px;line-height:14px;">Details ...</div>
<svg class="a" style="left:534.7px;top:730px;" width="12" height="12" viewBox="0 0 12 12"><defs><radialGradient id="rg" cx="40%" cy="35%"><stop offset="0" stop-color="#fff"/><stop offset="1" stop-color="#d8d8d8"/></radialGradient></defs><circle cx="6" cy="6" r="5.5" fill="url(#rg)" stroke="#8a8a8a"/></svg>
<div class="t" style="left:550px;top:729.74px;font-size:10.2px;line-height:14px;">Standbogen</div>
<svg class="a" style="left:687px;top:730px;" width="12" height="12" viewBox="0 0 12 12"><defs><radialGradient id="rg" cx="40%" cy="35%"><stop offset="0" stop-color="#fff"/><stop offset="1" stop-color="#d8d8d8"/></radialGradient></defs><circle cx="6" cy="6" r="5.5" fill="url(#rg)" stroke="#8a8a8a"/></svg>
<div class="t" style="left:702.6px;top:729.74px;font-size:10.2px;line-height:14px;">manuell</div>
<div class="a" style="left:510px;top:819px;width:524px;height:1px;background:#c8c8c8"></div>
<div class="a" style="left:510px;top:820px;width:524px;height:1px;background:#fff"></div>
<div class="t" style="left:510px;top:829.74px;font-size:10.2px;line-height:14px;">Diesen Prozess verwenden wenn:</div>
<div class="a" style="left:510px;top:846px;width:426px;height:44px;border:1px solid #8a8a8a;background:#fff"></div>
<div class="t" style="left:514px;top:848.74px;font-size:10.2px;line-height:14px;">[ProductType] = "Unbound"</div>
<div class="a" style="left:953px;top:848px;width:79px;height:20px;border:1px solid #707070;border-radius:3px;background:linear-gradient(#f3f3f3 0%,#ececec 48%,#dedede 52%,#d0d0d0 100%);"></div>
<div class="t" style="left:953px;width:79px;text-align:center;top:851.74px;font-size:10.2px;line-height:14px;">Bearbeiten ...</div>
<div class="a" style="left:176px;top:917px;width:70px;height:20px;border:1px solid #3c9fd8;border-radius:3px;background:linear-gradient(#eaf6fd 0%,#d9f0fc 48%,#bee6fd 52%,#a7d9f5 100%)"></div>
<div class="t" style="left:176px;width:70px;text-align:center;top:920.74px;font-size:10.2px;line-height:14px;">OK</div>
<div class="a" style="left:11px;top:93px;width:2px;height:893px;background:#f8f8fb"></div>
<svg class="a" style="left:18px;top:189px;" width="25" height="19" viewBox="0 0 25 19"><rect x="1" y="1" width="12" height="9" fill="#fff" stroke="#c8ccd8"/><rect x="4" y="4" width="12" height="9" fill="#f6f6f8" stroke="#c8ccd8"/><rect x="7" y="7" width="12" height="10" fill="#fff" stroke="#c8ccd8"/></svg>
<div class="a" style="left:36px;top:196.5px;width:0;height:0;border-left:3px solid transparent;border-right:3px solid transparent;border-top:3px solid #222"></div>
<svg class="a" style="left:18px;top:222px;" width="18" height="15" viewBox="0 0 18 15"><path d="M8 4 H14 V1 L18 5 L14 9 V6 H8Z" fill="#5ab840"/><path d="M10 9 H4 V6 L0 10 L4 14 V11 H10Z" fill="#3a78e0"/></svg>
<div class="a" style="left:36px;top:229.5px;width:0;height:0;border-left:3px solid transparent;border-right:3px solid transparent;border-top:3px solid #222"></div>
<svg class="a" style="left:25px;top:258px;" width="14" height="14" viewBox="0 0 14 14"><path d="M1 1 L13 13 M13 1 L1 13" stroke="#f08a30" stroke-width="2"/></svg>
<svg class="a" style="left:21px;top:529px;" width="21" height="21" viewBox="0 0 21 21"><defs><linearGradient id="yg" x1="0" y1="0" x2="0" y2="1"><stop offset="0" stop-color="#fff4cc"/><stop offset=".45" stop-color="#fde9a0"/><stop offset=".5" stop-color="#fcd860"/><stop offset="1" stop-color="#fde080"/></linearGradient></defs><circle cx="10.5" cy="10.5" r="9.3" fill="url(#yg)" stroke="#9ab4e0" stroke-width="1.2"/><path d="M5 10.5 H15 M11 6 L15.5 10.5 L11 15" fill="none" stroke="#3a5ab0" stroke-width="2"/></svg>
<svg class="a" style="left:179px;top:335px;" width="28" height="18" viewBox="0 0 28 18"><path d="M1 6 Q1 2 6 2 L24 1 Q27 1 27 5 L27 12 Q27 16 23 16 L6 17 Q1 17 1 13Z" fill="#c8d8ee" stroke="#9ab0d0" stroke-width=".8"/><path d="M1 6 Q1 2 6 2 L24 1 Q27 1 27 4 L27 6 L1 8Z" fill="#2060c0"/><rect x="9" y="2" width="5" height="4" fill="#fff" opacity=".8"/></svg>
<svg class="a" style="left:179px;top:365px;" width="28" height="18" viewBox="0 0 28 18"><path d="M1 6 Q1 2 6 2 L24 1 Q27 1 27 5 L27 12 Q27 16 23 16 L6 17 Q1 17 1 13Z" fill="#e0e0e4" stroke="#9ab0d0" stroke-width=".8"/><path d="M1 6 Q1 2 6 2 L24 1 Q27 1 27 4 L27 6 L1 8Z" fill="#2060c0"/><rect x="9" y="2" width="5" height="4" fill="#fff" opacity=".8"/></svg>
<svg class="a" style="left:183px;top:392px;" width="22" height="24" viewBox="0 0 22 24"><path d="M9 10 L20 7 L20.5 18 Q20 21 17 21.5 L9 23 Z" fill="#1e1e1e"/><line x1="5" y1="8" x2="16.5" y2="4.5" stroke="#1e1e1e" stroke-width="9" stroke-linecap="round"/><line x1="5" y1="8" x2="16.5" y2="4.5" stroke="#fff" stroke-width="5" stroke-linecap="round"/><circle cx="4.5" cy="8" r="1.2" fill="#1e1e1e"/><path d="M9 14 A4.3 4.3 0 1 0 9 21" fill="#fff" stroke="#1e1e1e" stroke-width="2"/><circle cx="5" cy="17.5" r="1.2" fill="#1e1e1e"/></svg>
<svg class="a" style="left:183px;top:422px;" width="22" height="24" viewBox="0 0 22 24"><path d="M9 10 L20 7 L20.5 18 Q20 21 17 21.5 L9 23 Z" fill="#1e1e1e"/><line x1="5" y1="8" x2="16.5" y2="4.5" stroke="#1e1e1e" stroke-width="9" stroke-linecap="round"/><line x1="5" y1="8" x2="16.5" y2="4.5" stroke="#fff" stroke-width="5" stroke-linecap="round"/><circle cx="4.5" cy="8" r="1.2" fill="#1e1e1e"/><path d="M9 14 A4.3 4.3 0 1 0 9 21" fill="#fff" stroke="#1e1e1e" stroke-width="2"/><circle cx="5" cy="17.5" r="1.2" fill="#1e1e1e"/></svg>
<svg class="a" style="left:182px;top:451px;" width="22" height="22" viewBox="0 0 22 22"><path d="M1 8 L11 1 L21 13 L16 18 L19 21 L8 21 Z" fill="#4a50c8"/><path d="M1.5 8 L11 1.5 L20 12.5 L10 19.5 Z" fill="#b8bcf4" stroke="#3a40b8" stroke-width="1.2"/><path d="M6 9 L11 6 L15 11" fill="none" stroke="#e8ecff" stroke-width="1"/><path d="M9 20 L19 20.5 L16 17Z" fill="#3a48c0"/></svg>
<svg class="a" style="left:184px;top:482px;" width="20" height="23" viewBox="0 0 20 23"><rect x="2" y="3" width="12" height="15" fill="#fbfbfb"/><rect x="2" y="3" width="2" height="15" fill="#b8a880"/><g stroke="#9a9aa0" stroke-width=".8"><path d="M6 6 h6 M6 8.5 h6 M6 11 h5 M6 13.5 h3 M6 16 h6"/></g><path d="M1 3.5 H19 M1 18.5 H19" stroke="#f04870" stroke-width="1.3"/><path d="M14.5 0 V23" stroke="#f04870" stroke-width="1.3"/></svg>
<svg class="a" style="left:181px;top:511px;" width="26" height="20" viewBox="0 0 26 20"><rect x="0.8" y="0.8" width="24.4" height="18.4" fill="#fdfdfd" stroke="#8a8a8a" stroke-width="1.6"/><g stroke="#d8d8d8" stroke-width=".7"><path d="M7 2 v16 M13 2 v16 M19 2 v16"/></g><g stroke="#c8c8d0" stroke-width=".6"><path d="M2.5 5 h3 M2.5 8 h3 M8.5 4 h3 M8.5 7 h2 M14.5 5 h3 M14.5 8 h3 M2.5 13 h3 M8.5 12 h3 M14.5 13 h3 M20.5 5 h3"/></g><path d="M0.8 15 V19.2 H4" stroke="#e82020" stroke-width="1.4" fill="none"/></svg>
<div class="a" style="left:53px;top:969px;width:690px;height:16px;background:linear-gradient(#e8e8e8,#f2f2f2 40%,#f2f2f2)"></div>
<div class="a" style="left:58px;top:973px;border-top:4px solid transparent;border-bottom:4px solid transparent;border-right:4px solid #555"></div>
<div class="a" style="left:734px;top:973px;border-top:4px solid transparent;border-bottom:4px solid transparent;border-left:4px solid #555"></div>
<div class="a" style="left:70px;top:970px;width:630px;height:14px;border:1px solid #9a9aa4;border-radius:2px;background:linear-gradient(#f4f4f6,#e6e6ea 50%,#d4d4da 52%,#cacad2)"></div>
<div class="a" style="left:382px;top:974px;width:1px;height:6px;background:#666"></div>
<div class="a" style="left:385px;top:974px;width:1px;height:6px;background:#666"></div>
<div class="a" style="left:388px;top:974px;width:1px;height:6px;background:#666"></div>
<div class="a" style="left:1233px;top:969px;width:609px;height:16px;background:linear-gradient(#e8e8e8,#f2f2f2 40%,#f2f2f2)"></div>
<div class="a" style="left:1238px;top:973px;border-top:4px solid transparent;border-bottom:4px solid transparent;border-right:4px solid #555"></div>
<div class="a" style="left:1833px;top:973px;border-top:4px solid transparent;border-bottom:4px solid transparent;border-left:4px solid #555"></div>
<div class="a" style="left:1251px;top:970px;width:424px;height:14px;border:1px solid #9a9aa4;border-radius:2px;background:linear-gradient(#f4f4f6,#e6e6ea 50%,#d4d4da 52%,#cacad2)"></div>
<div class="a" style="left:1460px;top:974px;width:1px;height:6px;background:#666"></div>
<div class="a" style="left:1463px;top:974px;width:1px;height:6px;background:#666"></div>
<div class="a" style="left:1466px;top:974px;width:1px;height:6px;background:#666"></div>
<svg class="a" style="left:1407px;top:989px;" width="12" height="15" viewBox="0 0 12 15"><rect x="2" y="1" width="8" height="11" fill="#f0f0f0" stroke="#888" stroke-width=".8"/><path d="M4 4 h4 M4 6 h4" stroke="#999" stroke-width=".7"/><path d="M0 14 L4 10 L6 13" stroke="#e0a020" stroke-width="1.2" fill="none"/></svg>
<div class="a" style="left:11px;top:1006px;width:62px;height:37px;background:linear-gradient(90deg,#9eabc8 0%,#a6b3d0 60%,rgba(185,201,231,0) 100%)"></div>
<svg class="a" style="left:19px;top:1006px;" width="37" height="37" viewBox="0 0 37 37"><defs><radialGradient id="orb" cx="50%" cy="55%" r="55%"><stop offset="0" stop-color="#8ad4f4"/><stop offset=".45" stop-color="#3a8ac8"/><stop offset=".85" stop-color="#1a4a88"/><stop offset="1" stop-color="#2a5a98"/></radialGradient><linearGradient id="gl" x1="0" y1="0" x2="0" y2="1"><stop offset="0" stop-color="#fff" stop-opacity=".55"/><stop offset="1" stop-color="#fff" stop-opacity="0"/></linearGradient></defs><circle cx="18" cy="18" r="17.3" fill="url(#orb)" stroke="#5a7aa8" stroke-width="1"/><path d="M10 11 Q13 8.5 17 10.5 L15.8 16.8 Q12 14.8 9 16.8Z" fill="#f06a30"/><path d="M18.5 10.8 Q22 9 26.5 10.5 L25.3 17 Q21.5 15.5 17.3 17Z" fill="#8ac440"/><path d="M8.7 18.3 Q12 16.3 15.5 18.3 L14.3 24.8 Q10.5 23 7.5 24.8Z" fill="#40a8f0"/><path d="M17 18.5 Q21 17 25 18.5 L23.8 25.3 Q20 23.8 15.8 25.3Z" fill="#fcc830"/><ellipse cx="18" cy="10" rx="13" ry="7.5" fill="url(#gl)"/></svg>
<svg class="a" style="left:81px;top:1011px;" width="31" height="28" viewBox="0 0 31 28"><path d="M1 4 H11 L13 2 H29 V26 H1Z" fill="#f2dc98" stroke="#c8a860" stroke-width=".8"/><rect x="4" y="3" width="22" height="7" fill="#fff" stroke="#d8d8d8" stroke-width=".5"/><rect x="6" y="3.5" width="3" height="2" fill="#3a3"/><rect x="13" y="5" width="3" height="2" fill="#e33"/><rect x="20" y="6.5" width="3" height="2" fill="#39f"/><path d="M1 9 H29 V26 H1Z" fill="#f8e6b0"/><path d="M5 16 H25 V27 H21 V21 H9 V27 H5Z" fill="#a8dcf8" stroke="#6ab8e8" stroke-width=".8"/></svg>
<svg class="a" style="left:140px;top:1009px;" width="30" height="30" viewBox="0 0 30 30"><defs><radialGradient id="ffg" cx="62%" cy="38%" r="50%"><stop offset="0" stop-color="#6ac0f0"/><stop offset=".6" stop-color="#2a6ac8"/><stop offset="1" stop-color="#1a3a90"/></radialGradient><radialGradient id="ffo" cx="40%" cy="65%" r="60%"><stop offset="0" stop-color="#f8a030"/><stop offset=".7" stop-color="#e86420"/><stop offset="1" stop-color="#c84a18"/></radialGradient></defs><circle cx="15" cy="15" r="14" fill="url(#ffg)"/><path d="M2 10 Q0 22 9 27.5 Q19 31 26 24 Q29 20 29 15 Q27 24 17 24.5 Q9 24 8 16 Q10 19 14 19 Q10 15 13 11 Q9 10 7 12 Q7 6 11 3 Q5 4 2 10Z" fill="url(#ffo)"/><path d="M24 3 Q29 8 29 15" fill="none" stroke="#f8c040" stroke-width="2"/></svg>
<svg class="a" style="left:200px;top:1010px;" width="28" height="25" viewBox="0 0 28 25"><rect x="1" y="0" width="27" height="24" fill="#fdfdfd"/><rect x="1" y="24" width="27" height="1" fill="#8a98b8"/><path d="M13.5 7 C11.5 3 14 0.5 15.5 2.5 C17 4.5 15 8 13.8 11 C12 16 10 20 8 22 C6 24 4 22 6 20.5 C10 17.5 16 15.5 22 15.5 C25.5 15.5 25.5 18.5 22 18.5 C18 18.5 15 12 13.5 7 Z" fill="none" stroke="#e81818" stroke-width="1.6"/></svg>
<svg class="a" style="left:259px;top:1009px;" width="30" height="30" viewBox="0 0 30 30"><path d="M3 18 Q0 8 12 6 Q24 5 26 14 Q26 20 20 18 Q15 17 16 23 Q16 27 10 26 Q4 25 3 18Z" fill="#d8e8f0" stroke="#8ab0c8"/><circle cx="8" cy="17" r="2" fill="#e84040"/><circle cx="11" cy="11" r="2" fill="#4ab040"/><circle cx="17" cy="9" r="2" fill="#f0c020"/><circle cx="14" cy="16" r="2" fill="#8ab0e8"/><path d="M14 28 L27 3" stroke="#e89030" stroke-width="2.5"/><path d="M25 6 L28 1" stroke="#a07040" stroke-width="2"/></svg>
<svg class="a" style="left:317px;top:1010px;" width="30" height="28" viewBox="0 0 30 28"><defs><linearGradient id="np" x1="0" y1="0" x2="1" y2="1"><stop offset="0" stop-color="#e0f4fc"/><stop offset=".5" stop-color="#88c8e4"/><stop offset="1" stop-color="#5aa8cc"/></linearGradient></defs><path d="M9 1 L26 2 L29 25 L1 24Z" fill="#f4f8fa" stroke="#a8b8c0" stroke-width=".7"/><path d="M9 1 L23 2 L18 24 L1 24Z" fill="url(#np)"/><path d="M9 1 L26 2" stroke="#888" stroke-width="1.5" stroke-dasharray="1 1"/></svg>
<svg class="a" style="left:377px;top:1008px;" width="29" height="31" viewBox="0 0 29 31"><ellipse cx="12" cy="10" rx="10" ry="8.5" fill="#f4f4fa" stroke="#e04848" stroke-width="1.6"/><ellipse cx="9" cy="19" rx="8" ry="6" fill="#e8e8f0" opacity=".8"/><path d="M9 4 L19 21 M15 3 L14 22" stroke="#6a7888" stroke-width="1.5"/><ellipse cx="22" cy="23" rx="4" ry="3" fill="none" stroke="#3a90d8" stroke-width="2" transform="rotate(40 22 23)"/><ellipse cx="15" cy="27" rx="2.5" ry="3.5" fill="none" stroke="#3a90d8" stroke-width="2"/></svg>
<svg class="a" style="left:436px;top:1009px;" width="30" height="30" viewBox="0 0 30 30"><rect x="10" y="7" width="19" height="15" fill="#fff" stroke="#1a6fc8" stroke-width="1.5"/><path d="M10 8 L19.5 16 L29 8" fill="none" stroke="#1a6fc8" stroke-width="1.5"/><path d="M0 4 L16 0 L16 30 L0 26Z" fill="#1a6fc8"/><ellipse cx="8" cy="15" rx="4" ry="5" fill="none" stroke="#fff" stroke-width="2.2"/></svg>
<svg class="a" style="left:495px;top:1009px;" width="30" height="30" viewBox="0 0 30 30"><circle cx="15" cy="15" r="15" fill="#3a6ec0"/><circle cx="15" cy="15" r="6.5" fill="none" stroke="#fff" stroke-width="4" stroke-dasharray="3 2"/><circle cx="15" cy="15" r="5" fill="none" stroke="#fff" stroke-width="2.5"/></svg>
<div class="a" style="left:554px;top:1009px;width:30px;height:29px;background:linear-gradient(#2a6ac0,#143a80);border-radius:3px"></div>
<div class="t" style="left:554px;top:1005px;width:30px;text-align:center;font-size:30px;line-height:36px;font-weight:bold;color:#fff">S</div>
<svg class="a" style="left:618px;top:1009px;" width="20" height="29" viewBox="0 0 20 29"><path d="M2 6 Q2 1 10 1 Q18 1 18 6 L18 26 L2 26Z" fill="#2a7ad0" stroke="#1a5aa0"/><path d="M5 6 Q5 3 10 3 Q15 3 15 6 L15 24 L5 24Z" fill="#4a9ae8"/><rect x="6" y="13" width="8" height="3" fill="#1a4a90"/><rect x="6" y="26" width="3" height="3" fill="#555"/><rect x="11" y="26" width="3" height="3" fill="#555"/></svg>
<svg class="a" style="left:674px;top:1009px;" width="29" height="30" viewBox="0 0 29 30"><rect x="7.5" y="2.5" width="19" height="20" rx="3" fill="none" stroke="#40a8e0" stroke-width="5"/><rect x="3" y="8" width="18" height="19" rx="3" fill="none" stroke="#f8a828" stroke-width="5"/><path d="M10 10.5 H18.5 V22" fill="none" stroke="#40a8e0" stroke-width="5"/><rect x="10" y="13" width="6" height="7" fill="#fff"/></svg>
<div class="a" style="left:719px;top:1006px;width:55px;height:36px;border:1px solid #6a7690;border-radius:3px;background:linear-gradient(#f4f7fc,#dfe5f3);box-shadow:inset 0 0 0 1px #fff"></div>
<svg class="a" style="left:731px;top:1009px;" width="31" height="30" viewBox="0 0 31 30"><rect x="0" y="0" width="31" height="30" fill="#c4cde8"/><path d="M4 14 L13 8 L16 18 L8 22Z" fill="#fff" stroke="#8890b0" stroke-width=".6"/><path d="M10 11 L14 10 L13 18Z" fill="#a02070"/><path d="M15 5 L22 2 L23 12 L17 13Z" fill="#f4f4fa" stroke="#889" stroke-width=".5"/><path d="M17 12 L23 10 L24 28 L18 28Z" fill="#3a6ac0"/><path d="M12 18 L18 24 L11 26Z" fill="#70208a"/></svg>
<div class="a" style="left:778px;top:1006px;width:56px;height:36px;border:1px solid #6a7690;border-radius:3px;background:linear-gradient(#f4f7fc,#dfe5f3);box-shadow:inset 0 0 0 1px #fff"></div>
<svg class="a" style="left:791px;top:1009px;" width="30" height="30" viewBox="0 0 30 30"><defs><radialGradient id="kp" cx="30%" cy="50%"><stop offset="0" stop-color="#fff"/><stop offset=".5" stop-color="#b8a0d8"/><stop offset="1" stop-color="#5a3a8a"/></radialGradient></defs><rect width="30" height="30" fill="url(#kp)"/><rect x="15" y="6" width="10" height="14" fill="#e8e8e8" stroke="#888" stroke-width=".8"/><path d="M20 20 V26 M16 26 H24" stroke="#e0a020" stroke-width="1.5"/></svg>
</body></html>
